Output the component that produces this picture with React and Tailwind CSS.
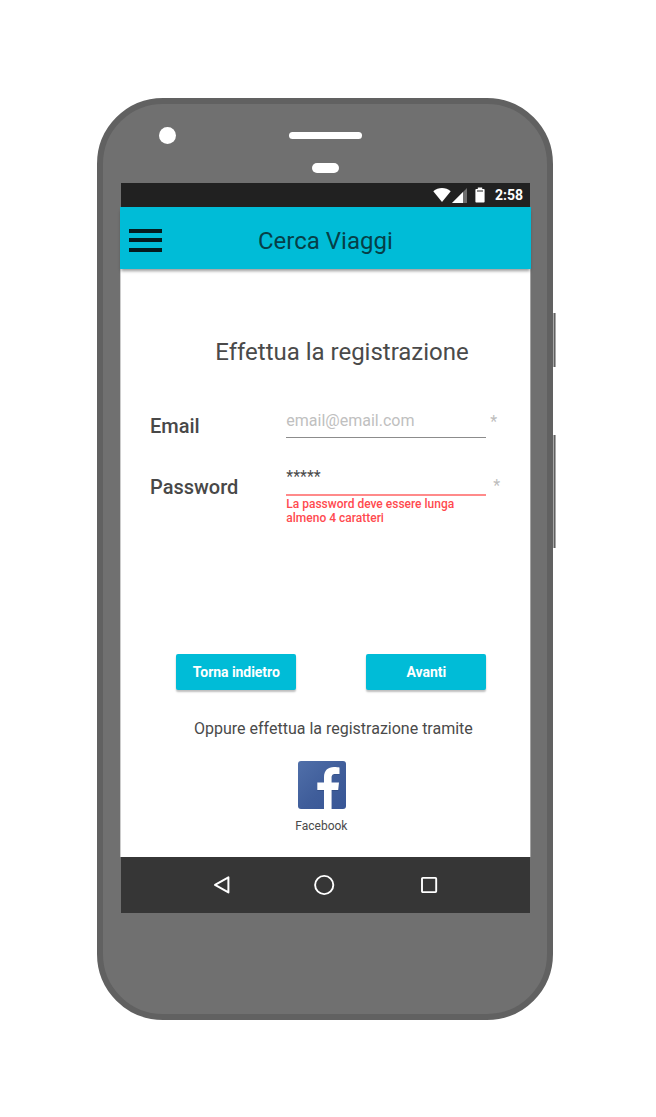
import React from "react";

function StatusBar() {
  return (
    <div className="flex h-[24px] items-center justify-end bg-[#212121] pr-[7px] text-white">
      <svg className="mr-px h-[14px] w-[18px]" viewBox="0 0 18 14" fill="currentColor">
        <path d="M0.3 3.2C5.4-1 12.6-1 17.7 3.2L9 14Z" />
      </svg>
      <svg className="mr-[8px] h-[15px] w-[15px]" viewBox="0 0 15 15" fill="currentColor">
        <path d="M15 0V15H0Z" opacity="0.35" />
        <path d="M11 4V15H0Z" />
      </svg>
      <svg className="mr-[10px] h-[16px] w-[10px]" viewBox="0 0 10 16" fill="currentColor">
        <path d="M2.8 0.5H7.2V2H8.8Q9.6 2 9.6 2.8V14.7Q9.6 15.5 8.8 15.5H1.2Q0.4 15.5 0.4 14.7V2.8Q0.4 2 1.2 2H2.8Z" />
        <path d="M2 3.5H8V4.5H2Z" fill="#212121" />
      </svg>
      <span className="text-[14px] leading-[24px] font-bold">2:58</span>
    </div>
  );
}

function AppBar() {
  return (
    <header className="relative -mr-px -ml-px flex h-[62px] bg-[#00bcd7] pl-[9px] shadow-[0_3px_3px_-1px_rgba(0,0,0,0.4)]">
      <div className="mt-[22px] flex w-[33px] flex-col gap-[5.4px]">
        <span className="h-[4px] bg-[#051b1e]" />
        <span className="h-[4px] bg-[#051b1e]" />
        <span className="h-[4px] bg-[#051b1e]" />
      </div>
      <h1 className="mt-[18px] ml-[96px] text-[24px] leading-[32px] whitespace-nowrap text-[#063f47]">
        Cerca Viaggi
      </h1>
    </header>
  );
}

function Button({ children }) {
  return (
    <button className="h-[36px] w-[120px] rounded-[2px] bg-[#00bcd7] text-[14px] font-bold tracking-[-0.05px] text-white shadow-[0_2px_2px_rgba(0,0,0,0.26)]">
      {children}
    </button>
  );
}

function NavBar() {
  return (
    <nav className="flex h-[56px] items-center bg-[#363636] pl-[91.5px] text-white">
      <svg className="h-[20px] w-[18px]" viewBox="0 0 18 20" fill="none" stroke="currentColor" strokeWidth="2" strokeLinejoin="round">
        <path d="M15.4 2.3V17.4L2 9.9Z" />
      </svg>
      <svg className="ml-[82.5px] h-[22px] w-[22px]" viewBox="0 0 22 22" fill="none" stroke="currentColor" strokeWidth="1.9">
        <circle cx="11.2" cy="11" r="9.1" />
      </svg>
      <svg className="ml-[85px] h-[18px] w-[18px]" viewBox="0 0 18 18" fill="none" stroke="currentColor" strokeWidth="1.9">
        <rect x="2" y="1.9" width="14.2" height="14.2" rx="0.8" />
      </svg>
    </nav>
  );
}

export default function App() {
  return (
    <div className="h-[1117px] w-[656px] bg-white pt-[98px] pl-[97px] font-['Roboto',sans-serif]">
      <div className="relative h-[922px] w-[456px] rounded-[66px] border-[6px] border-[#616161] bg-[#707070]">
        <span className="absolute top-[209px] -right-[9px] h-[54px] w-[3px] border-x border-x-[#a8a8a8] bg-[#616161]" />
        <span className="absolute top-[331px] -right-[9px] h-[113px] w-[3px] border-x border-x-[#a8a8a8] bg-[#616161]" />

        <div className="flex h-[40px] pl-[56px]">
          <span className="mt-[23px] h-[17px] w-[17px] rounded-full bg-white" />
          <span className="mt-[28px] ml-[113px] h-[7px] w-[73px] rounded-full bg-white" />
        </div>
        <div className="h-[39px] pt-[19px] pl-[209px]">
          <div className="h-[10px] w-[27px] rounded-full bg-white" />
        </div>

        <div className="ml-[18px] flex h-[730px] w-[409px] flex-col bg-white">
          <StatusBar />
          <AppBar />
          <main className="-mr-px -ml-px flex-1 border-r border-l border-r-[#a3a3a3] border-l-[#cccccc] bg-white text-[#4a4a4a]">
            <h2 className="mt-[67px] ml-[94.3px] text-[24px] leading-[32px] tracking-[-0.01px] whitespace-nowrap">
              Effettua la registrazione
            </h2>

            <div className="mt-[41px] ml-[29px] flex h-[61px]">
              <label className="mt-[3px] w-[136.3px] text-[20px] leading-[28px] font-medium text-[#484848]">Email</label>
              <div className="h-[29px] w-[200px] border-b border-[#8c8c8c] text-[16px] leading-[24px] text-[#c0c0c0]">
                email@email.com
              </div>
              <span className="mt-px ml-[4px] text-[16px] leading-[24px] text-[#bdbdbd]">*</span>
            </div>

            <div className="ml-[29px] flex h-[184px]">
              <label className="mt-[3px] w-[136.3px] text-[20px] leading-[28px] font-medium text-[#484848]">Password</label>
              <div className="w-[200px]">
                <div className="-mt-[5px] h-[31px] border-b-2 border-[#ff8a8a] text-[16px] leading-[24px]">
                  *****
                </div>
                <p className="mt-px text-[12px] leading-[14px] font-medium text-[#ff4a4f]">
                  La password deve essere lunga almeno 4 caratteri
                </p>
              </div>
              <span className="mt-[4px] ml-[7px] text-[16px] leading-[24px] text-[#bdbdbd]">*</span>
            </div>

            <div className="flex gap-[70px] pl-[55.3px]">
              <Button>Torna indietro</Button>
              <Button>Avanti</Button>
            </div>

            <p className="mt-[27px] ml-[73px] text-[16px] leading-[24px] whitespace-nowrap">
              Oppure effettua la registrazione tramite
            </p>

            <div className="mt-[20px] ml-[174.3px]">
              <svg className="ml-[3px] h-[48px] w-[48px]" viewBox="0 0 48 48">
                <defs>
                  <linearGradient id="tile" x1="0" y1="0" x2="1" y2="1">
                    <stop offset="0" stopColor="#506fa9" />
                    <stop offset="0.55" stopColor="#3f5d9a" />
                    <stop offset="1" stopColor="#385696" />
                  </linearGradient>
                </defs>
                <rect width="48" height="48" rx="3" fill="url(#tile)" />
                <path d="M26 48V30H19.3V22H26V16.5C26 9.5 30 6.5 36 6.5H41.5V13.7H37.5C34.4 13.7 33.6 15 33.6 17.5V22H41L40.2 30H33.6V48Z" fill="#1d3565" opacity="0.3" />
                <path d="M26 48V29H19.3V21.5H26V16C26 9.5 30 6 36 6C38.5 6 40.2 6.2 41.5 6.5V13H37.5C34.4 13 33.6 14.5 33.6 17V21.5H41L40.2 29H33.6V48Z" fill="white" />
              </svg>
              <p className="mt-[8px] text-[12px] leading-[18px]">Facebook</p>
            </div>
          </main>
          <NavBar />
        </div>
      </div>
    </div>
  );
}
